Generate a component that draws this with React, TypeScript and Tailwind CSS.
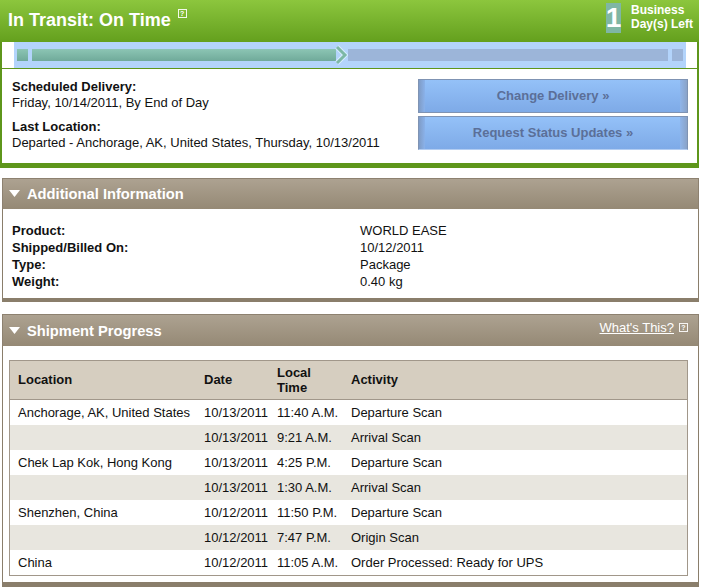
import React from "react";

const Help = ({ className = "" }: { className?: string }) => (
  <span
    className={
      "inline-flex items-center justify-center w-[9px] h-[9px] border border-white/90 text-[7px] leading-none font-bold text-white " +
      className
    }
  >
    ?
  </span>
);

const Tri = () => (
  <svg width="11" height="8" viewBox="0 0 11 8" className="shrink-0">
    <polygon points="0,0 11,0 5.5,7" fill="#ffffff" />
  </svg>
);

const Btn = ({ label, last = false }: { label: string; last?: boolean }) => (
  <div
    className={
      "relative flex h-[34px] w-[270px] items-center justify-center border border-[#7f93b3] bg-gradient-to-b from-[#94c1f8] to-[#7eaae7] " +
      (last ? "border-b-[#b3cdf2]" : "")
    }
  >
    <div className="absolute left-0 top-0 h-full w-[6px] bg-gradient-to-r from-[#7f9cc7] to-[#8ab2ea]" />
    <div className="absolute right-0 top-0 h-full w-[7px] bg-gradient-to-l from-[#8aa3c8] to-[#8fb5ea]" />
    <span className="relative text-[13px] font-bold text-[#5b6f98]">{label}</span>
  </div>
);

const rows = [
  ["Anchorage, AK, United States", "10/13/2011", "11:40 A.M.", "Departure Scan"],
  ["", "10/13/2011", "9:21 A.M.", "Arrival Scan"],
  ["Chek Lap Kok, Hong Kong", "10/13/2011", "4:25 P.M.", "Departure Scan"],
  ["", "10/13/2011", "1:30 A.M.", "Arrival Scan"],
  ["Shenzhen, China", "10/12/2011", "11:50 P.M.", "Departure Scan"],
  ["", "10/12/2011", "7:47 P.M.", "Origin Scan"],
  ["China", "10/12/2011", "11:05 A.M.", "Order Processed: Ready for UPS"],
];

export default function App() {
  return (
    <div
      className="w-[705px] h-[587px] overflow-hidden bg-white text-[13px] text-[#111]"
      style={{ fontFamily: '"Liberation Sans", Arial, Helvetica, sans-serif' }}
    >
      {/* Section 1 */}
      <div className="w-[699px]">
        <div className="flex h-[42px] items-start justify-between bg-gradient-to-b from-[#8cc63d] to-[#64a01d] pl-[8px] pr-[6px]">
          <div className="flex items-start pt-[7px]">
            <span className="text-[18px] font-bold text-white leading-[26px]">In Transit: On Time</span>
            <Help className="ml-[7px] mt-[2px]" />
          </div>
          <div className="flex items-start pt-[3px]">
            <div className="flex h-[30px] w-[15px] items-center justify-center bg-[#7fb6a4] text-[28px] font-bold leading-none text-white">
              1
            </div>
            <div className="ml-[10px] text-[12px] font-bold leading-[14px] text-white">
              <div>Business</div>
              <div>Day(s) Left</div>
            </div>
          </div>
        </div>
        <div className="border-x-2 border-b-[5px] border-[#5e961b]">
          <div className="border-b border-[#5e961b] pl-[12px] pr-[11px]">
            <div className="flex h-[26px] items-center bg-[#b3d4fb] px-[3px]">
              <div className="h-[12px] w-[11px] bg-gradient-to-b from-[#8cc5b4] to-[#70aa9a]" />
              <div className="ml-[4px] h-[12px] w-[304px] bg-gradient-to-b from-[#8cc5b4] to-[#70aa9a]" />
              <svg width="14" height="20" viewBox="0 0 14 20" className="-ml-[2px] shrink-0">
                <polyline points="3,2 11,10 3,18" fill="none" stroke="#d8ecff" strokeWidth="5" />
                <polyline points="3,2 11,10 3,18" fill="none" stroke="#7db8a6" strokeWidth="3" />
              </svg>
              <div className="h-[12px] flex-1 bg-[#9cb5d9]" />
              <div className="ml-[4px] h-[12px] w-[11px] bg-[#9cb5d9]" />
            </div>
          </div>
          <div className="flex justify-between pl-[10px] pr-[9px] pt-[10px] h-[94px]">
            <div className="leading-[16px]">
              <div className="font-bold">Scheduled Delivery:</div>
              <div>Friday, 10/14/2011, By End of Day</div>
              <div className="mt-[8px] font-bold">Last Location:</div>
              <div>Departed - Anchorage, AK, United States, Thursday, 10/13/2011</div>
            </div>
            <div className="flex flex-col gap-[3px]">
              <Btn label="Change Delivery »" />
              <Btn label="Request Status Updates »" last />
            </div>
          </div>
        </div>
      </div>

      {/* Section 2 */}
      <div className="ml-[2px] mt-[10px] w-[697px]">
        <div className="flex h-[31px] items-center gap-[7px] border border-b-0 border-[#8d8170] bg-gradient-to-b from-[#ada291] to-[#958975] pl-[6px]">
          <Tri />
          <span className="text-[14.7px] font-bold text-white">Additional Information</span>
        </div>
        <div className="border-x border-b-4 border-[#8a7e6b] pl-[9px] pt-[13px] pb-[8px] leading-[17px]">
          {[
            ["Product:", "WORLD EASE"],
            ["Shipped/Billed On:", "10/12/2011"],
            ["Type:", "Package"],
            ["Weight:", "0.40 kg"],
          ].map(([k, v]) => (
            <div key={k} className="grid grid-cols-[348px_1fr]">
              <div className="font-bold">{k}</div>
              <div>{v}</div>
            </div>
          ))}
        </div>
      </div>

      {/* Section 3 */}
      <div className="ml-[2px] mt-[12px] w-[697px]">
        <div className="flex h-[32px] items-start justify-between border border-b-0 border-[#8d8170] bg-gradient-to-b from-[#ada291] to-[#958975] pl-[6px] pr-[10px]">
          <div className="flex h-[32px] items-center gap-[7px]">
            <Tri />
            <span className="text-[14.7px] font-bold text-white">Shipment Progress</span>
          </div>
          <div className="flex items-center gap-[5px] pt-[3px]">
            <span className="text-[13px] text-white underline">What's This?</span>
            <Help />
          </div>
        </div>
        <div className="border-x border-b-[5px] border-[#8a7e6b] pl-[6px] pr-[10px] pt-[14px] pb-[6px]">
          <div className="border border-[#a1978a]">
            <div className="flex h-[39px] items-center border-b border-[#a1978a] bg-[#d6cec0] font-bold">
              <div className="w-[194px] pl-[8px]">Location</div>
              <div className="w-[73px]">Date</div>
              <div className="w-[74px] leading-[15px]">
                <div>Local</div>
                <div>Time</div>
              </div>
              <div className="flex-1">Activity</div>
            </div>
            {rows.map((r, i) => (
              <div
                key={i}
                className={"flex h-[25px] items-center " + (i % 2 === 1 ? "bg-[#e8e6df]" : "bg-white")}
              >
                <div className="w-[194px] pl-[8px] whitespace-nowrap">{r[0]}</div>
                <div className="w-[73px]">{r[1]}</div>
                <div className="w-[74px]">{r[2]}</div>
                <div className="flex-1">{r[3]}</div>
              </div>
            ))}
          </div>
        </div>
      </div>
    </div>
  );
}
